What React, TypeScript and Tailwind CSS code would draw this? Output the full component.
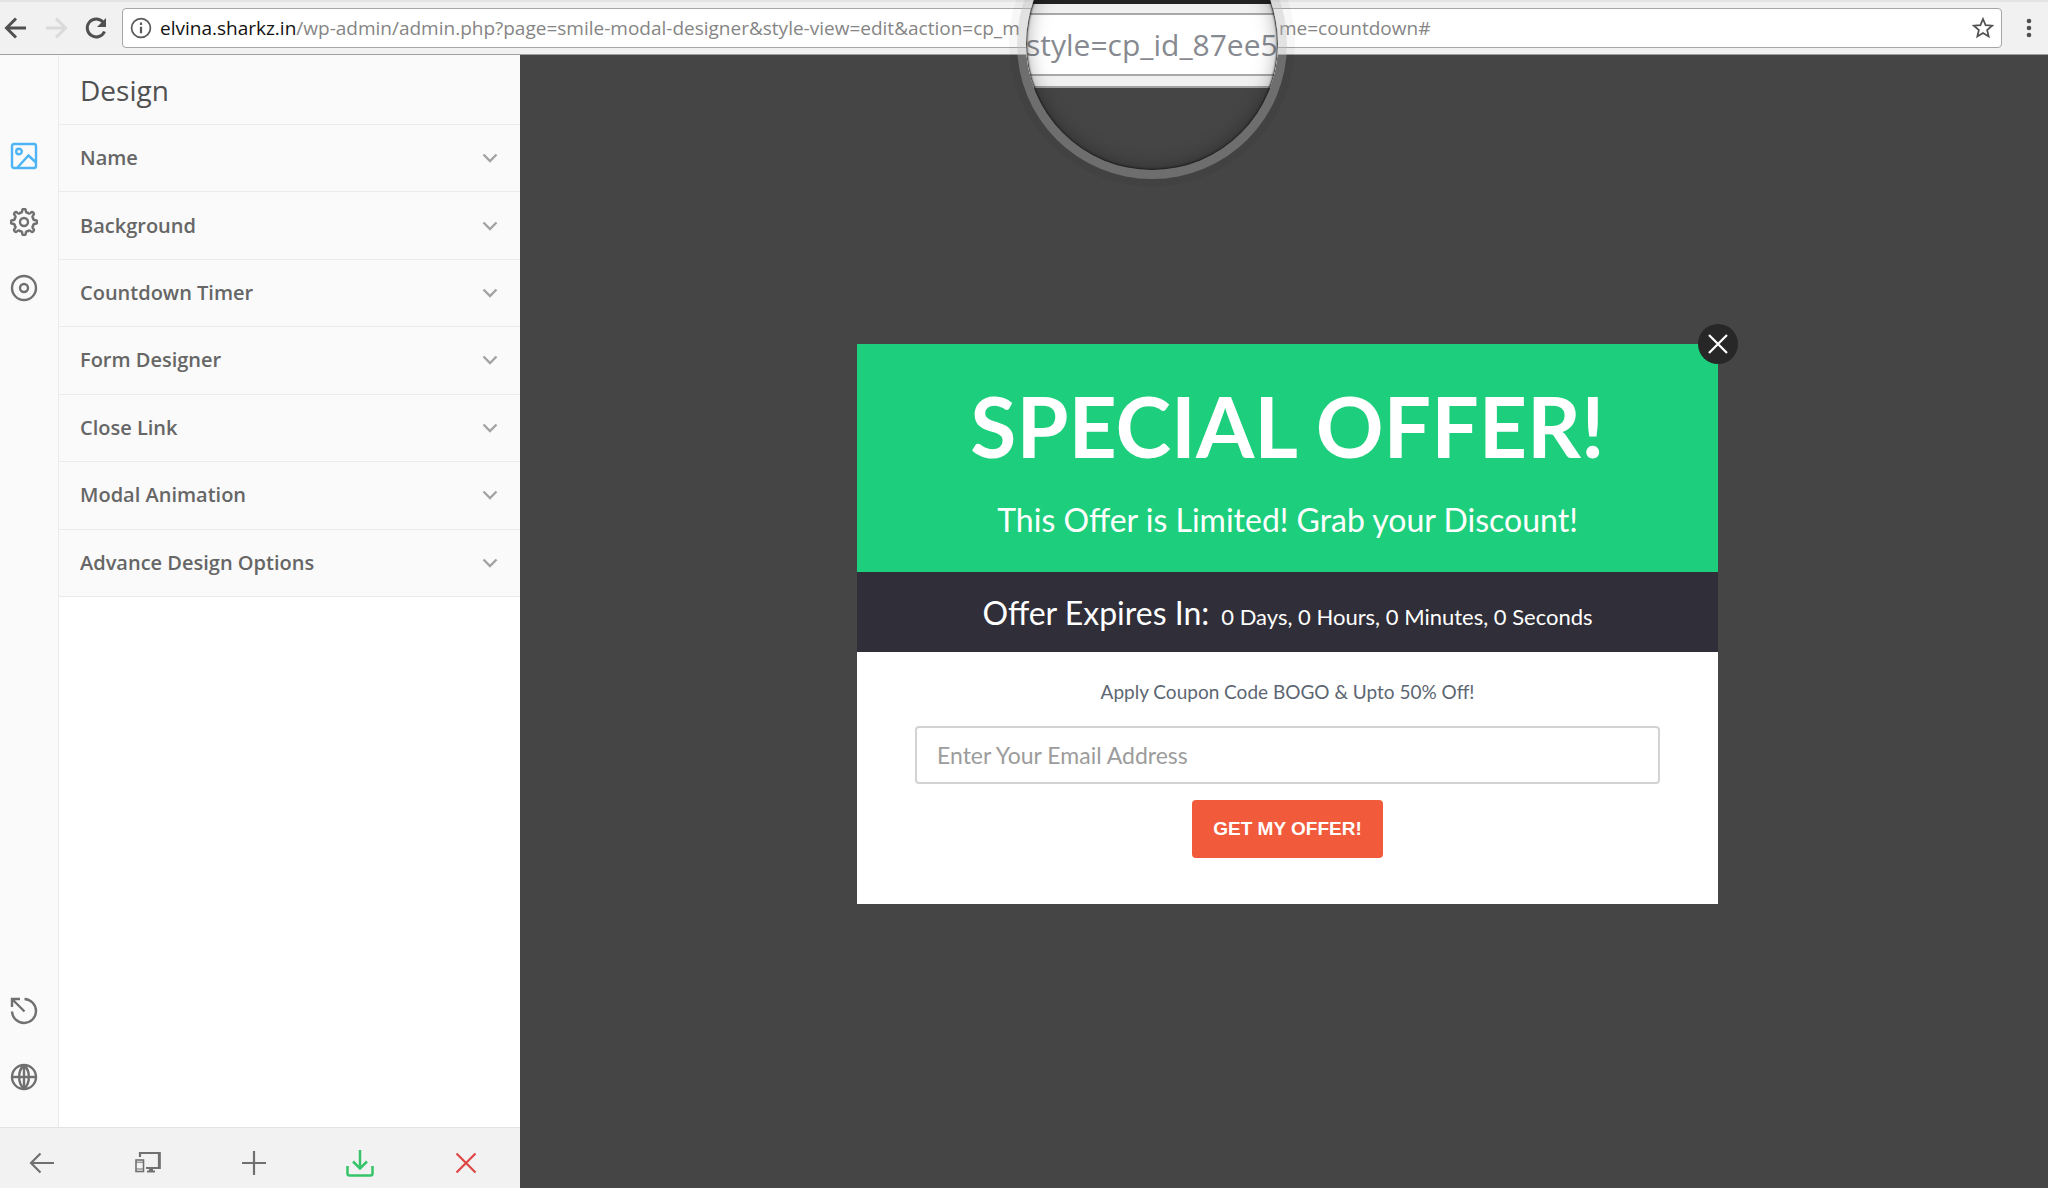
import { useState } from "react";
import type { ReactNode } from "react";

const sections = [
  "Name",
  "Background",
  "Countdown Timer",
  "Form Designer",
  "Close Link",
  "Modal Animation",
  "Advance Design Options",
];

interface IconProps {
  children: ReactNode;
  className?: string;
  stroke?: number;
}

function Icon({ children, className = "size-7", stroke = 2.2 }: IconProps) {
  return (
    <svg
      viewBox="0 0 28 28"
      className={className}
      fill="none"
      stroke="currentColor"
      strokeWidth={stroke}
      aria-hidden="true"
    >
      {children}
    </svg>
  );
}

// Eight rounded teeth around the hub
function gearPath() {
  let d = "";
  for (let i = 0; i < 8; i++) {
    const pt = (deg: number, r: number) => {
      const a = ((i * 45 + deg - 90) * Math.PI) / 180;
      return `${(14 + r * Math.cos(a)).toFixed(2)} ${(14 + r * Math.sin(a)).toFixed(2)}`;
    };
    d += `${i === 0 ? "M" : "L"}${pt(-9, 11.4)} Q${pt(-8, 13.2)} ${pt(0, 13.2)} Q${pt(8, 13.2)} ${pt(9, 11.4)} `;
    d += `Q${pt(12, 9)} ${pt(22.5, 10)} Q${pt(33, 9)} ${pt(36, 11.4)} `;
  }
  return d + "Z";
}

function RailButton({ label, active = false, children }: { label: string; active?: boolean; children: ReactNode }) {
  return (
    <button type="button" aria-label={label} className={active ? "size-7 text-[#4db4f5]" : "size-7 text-[#707070]"}>
      <Icon stroke={2.4}>{children}</Icon>
    </button>
  );
}

function AddressBar() {
  return (
    <header className="flex h-[55px] shrink-0 items-center border-t-2 border-b border-t-[#e4e4e4] border-b-[#a0a0a0] bg-[#f1f1f1]">
      <div className="flex w-[122px] shrink-0 items-center gap-3 pl-[2px] text-[#505050]">
        <button type="button" aria-label="Back">
          <Icon stroke={3}>
            <path d="M24 14H5M14 4.500 4.500 14 14 23.500" />
          </Icon>
        </button>
        <button type="button" aria-label="Forward" className="text-[#dadada]">
          <Icon stroke={3}>
            <path d="M4 14h19M14 4.500 23.500 14 14 23.500" />
          </Icon>
        </button>
        <button type="button" aria-label="Reload">
          <Icon stroke={3}>
            <path d="M22.500 17.500A9 9 0 1 1 21 8" />
            <path d="M24 4v9h-9z" fill="currentColor" stroke="none" />
          </Icon>
        </button>
      </div>
      <div className="flex h-10 min-w-0 flex-1 items-center rounded-[4px] border border-[#a6a6a6] bg-white pr-[6px] pl-[6px]">
        <Icon className="size-6 shrink-0 text-[#5a5a5a]" stroke={2}>
          <circle cx="14" cy="14" r="11" />
          <path d="M14 12.500v7.500M14 7.500v3" strokeWidth="2.600" />
        </Icon>
        <div className="ml-[7px] flex min-w-0 flex-1 overflow-hidden font-['Open_Sans',sans-serif] text-[19px] leading-6 whitespace-nowrap text-[#858585]">
          <span className="w-[1119px] shrink-0">
            <span className="text-[#111111]">elvina.sharkz.in</span>
            /wp-admin/admin.php?page=smile-modal-designer&amp;style-view=edit&amp;action=cp_m
          </span>
          <span>me=countdown#</span>
        </div>
        <button type="button" aria-label="Bookmark this page" className="shrink-0 text-[#505050]">
          <Icon className="size-6" stroke={2}>
            <path d="M14 3.500l3 7.200 7.700.6-5.900 5 1.800 7.600L14 19.800l-6.600 4.100 1.800-7.600-5.900-5 7.700-.6z" />
          </Icon>
        </button>
      </div>
      <button type="button" aria-label="Menu" className="flex w-[46px] shrink-0 justify-center pl-2 text-[#505050]">
        <svg viewBox="0 0 6 22" className="h-[22px] w-[6px]" fill="currentColor" aria-hidden="true">
          <circle cx="3" cy="4" r="2.300" />
          <circle cx="3" cy="11" r="2.300" />
          <circle cx="3" cy="18" r="2.300" />
        </svg>
      </button>
    </header>
  );
}

function Lens() {
  return (
    <div className="pointer-events-none absolute -top-[91px] left-[1017px] size-[270px] rounded-full bg-[#b3b3b3]/38 p-[9px] shadow-[0_0_0_8px_rgba(0,0,0,0.03)]">
      <div className="relative size-full overflow-hidden rounded-full bg-[#454545] pt-[82px]">
        <div className="h-1 bg-[#222222]" />
        <div className="border-b-2 border-[#a0a0a0] bg-[#f0f0f0] pt-[9px] pb-[10px]">
          <div className="flex h-[63px] items-center border-y-2 border-[#a8a8a8] bg-white font-['Open_Sans',sans-serif] text-[30px] whitespace-nowrap text-[#878a90]">
            style=cp_id_87ee5
          </div>
        </div>
        <div className="absolute inset-0 rounded-full shadow-[inset_0_0_20px_rgba(0,0,0,0.35),inset_0_0_2px_1px_#222222]" />
      </div>
    </div>
  );
}

function Sidebar() {
  const [open, setOpen] = useState("");

  return (
    <aside className="flex w-[520px] shrink-0 flex-col bg-white font-['Open_Sans',sans-serif]">
      <div className="flex flex-1">
        <nav className="flex w-[59px] shrink-0 flex-col justify-between border-r border-[#ebebeb] bg-[#fafafa] pt-[87px] pb-9 pl-[10px]">
          <div className="flex flex-col gap-[38px]">
            <RailButton label="Design" active>
              <rect x="2" y="2" width="24" height="24" rx="2" />
              <circle cx="9" cy="9.500" r="2.800" />
              <path d="M7 26 18.500 13.500 26 20.500" />
            </RailButton>
            <RailButton label="Behavior">
              <path d={gearPath()} />
              <circle cx="14" cy="14" r="4" />
            </RailButton>
            <RailButton label="Target">
              <circle cx="14" cy="14" r="12" />
              <circle cx="14" cy="14" r="4" />
            </RailButton>
          </div>
          <div className="flex flex-col gap-[38px]">
            <RailButton label="Reset">
              <path d="M14.500 2A12 12 0 1 1 2 14.500M14.500 14.500 3 3M2 10V2h8" />
            </RailButton>
            <RailButton label="Language">
              <circle cx="14" cy="14" r="12" />
              <path d="M2 14h24M14 2v24M14 2C7.500 8 7.500 20 14 26M14 2c6.500 6 6.500 18 0 24" />
            </RailButton>
          </div>
        </nav>
        <div className="min-w-0 flex-1">
          <h1 className="flex h-[70px] items-center border-b border-[#ebebeb] bg-[#fafafa] pl-[21px] text-[28px] text-[#505050]">
            Design
          </h1>
          <div className="flex h-[472px] flex-col bg-[#fafafa]">
            {sections.map((name) => (
              <button
                key={name}
                type="button"
                aria-expanded={open === name}
                onClick={() => setOpen(open === name ? "" : name)}
                className="flex flex-1 items-center justify-between border-b border-[#ebebeb] pr-[22px] pl-[21px] text-left text-[20px] font-semibold text-[#666666]"
              >
                {name}
                <svg viewBox="0 0 16 10" className="h-[10px] w-4" fill="none" stroke="#a3a3a3" strokeWidth="2.400" aria-hidden="true">
                  <path d="M1.500 1.500 8 8l6.500-6.500" />
                </svg>
              </button>
            ))}
          </div>
        </div>
      </div>
      <div className="flex h-[61px] shrink-0 items-center justify-between border-t border-[#e3e3e3] bg-[#f2f2f2] pt-[10px] pr-10 pl-7 text-[#707070]">
        <button type="button" aria-label="Back to dashboard">
          <Icon>
            <path d="M26 14H3M12.500 4.500 3 14l9.500 9.500" />
          </Icon>
        </button>
        <button type="button" aria-label="Responsive preview">
          <Icon>
            <path d="M6 8V4h19v15H12" />
            <path d="M25.500 3v17" strokeWidth="2.600" />
            <path d="M13 22.500h8M15 21h4" strokeWidth="1.800" />
            <rect x="2" y="11" width="7.500" height="11.500" strokeWidth="1.600" />
            <path d="M2 13.200h7.500M2 20h7.500" strokeWidth="1" />
          </Icon>
        </button>
        <button type="button" aria-label="Add new">
          <Icon>
            <path d="M14 2v24M2 14h24" />
          </Icon>
        </button>
        <button type="button" aria-label="Save" className="text-[#35c46a]">
          <Icon stroke={2.5}>
            <path d="M14 1v19M7 12.500l7 7 7-7M1.500 17v7.500a2 2 0 0 0 2 2h21a2 2 0 0 0 2-2V17" />
          </Icon>
        </button>
        <button type="button" aria-label="Close" className="text-[#de4545]">
          <Icon>
            <path d="M4.500 4.500l19 19M23.500 4.500l-19 19" />
          </Icon>
        </button>
      </div>
    </aside>
  );
}

function OfferModal() {
  return (
    <div className="relative w-[861px] bg-white text-center font-['Lato',sans-serif]">
      <button
        type="button"
        aria-label="Close offer"
        className="absolute -top-5 -right-5 flex size-10 items-center justify-center rounded-full bg-[#272727] text-white"
      >
        <Icon className="size-6" stroke={2.6}>
          <path d="M3.500 3.500l21 21M24.500 3.500l-21 21" />
        </Icon>
      </button>
      <div className="flex h-[228px] flex-col items-center bg-[#1dcf7c] pt-[34px] text-white">
        <h2 className="text-[84px] leading-[96px] font-bold">SPECIAL OFFER!</h2>
        <p className="mt-[26px] text-[32px] leading-10">This Offer is Limited! Grab your Discount!</p>
      </div>
      <div className="flex h-20 items-baseline justify-center gap-3 bg-[#302e38] pt-[21px] text-white">
        <span className="text-[32px] leading-10">Offer Expires In:</span>
        <span className="text-[22px]">0 Days, 0 Hours, 0 Minutes, 0 Seconds</span>
      </div>
      <form className="flex flex-col items-center px-[58px] pt-7 pb-[46px]" onSubmit={(e) => e.preventDefault()}>
        <p className="text-[19px] leading-6 text-[#5c6672]">Apply Coupon Code BOGO &amp; Upto 50% Off!</p>
        <input
          type="email"
          aria-label="Enter Your Email Address"
          placeholder="Enter Your Email Address"
          className="mt-[22px] h-[58px] w-full rounded-[4px] border-2 border-[#d3d3d3] px-5 text-[23px] placeholder:text-[#9c9c9c]"
        />
        <button
          type="submit"
          className="mt-4 h-[58px] rounded-[4px] bg-[#f15b3c] px-[21px] font-['Liberation_Sans',sans-serif] text-[19px] font-bold text-white"
        >
          GET MY OFFER!
        </button>
      </form>
    </div>
  );
}

export default function App() {
  return (
    <div className="relative flex min-h-screen flex-col overflow-hidden bg-[#454545]">
      <AddressBar />
      <main className="flex flex-1">
        <Sidebar />
        <section className="flex min-w-0 flex-1 items-center justify-center pt-[5px] pl-[7px]">
          <OfferModal />
        </section>
      </main>
      <Lens />
    </div>
  );
}
